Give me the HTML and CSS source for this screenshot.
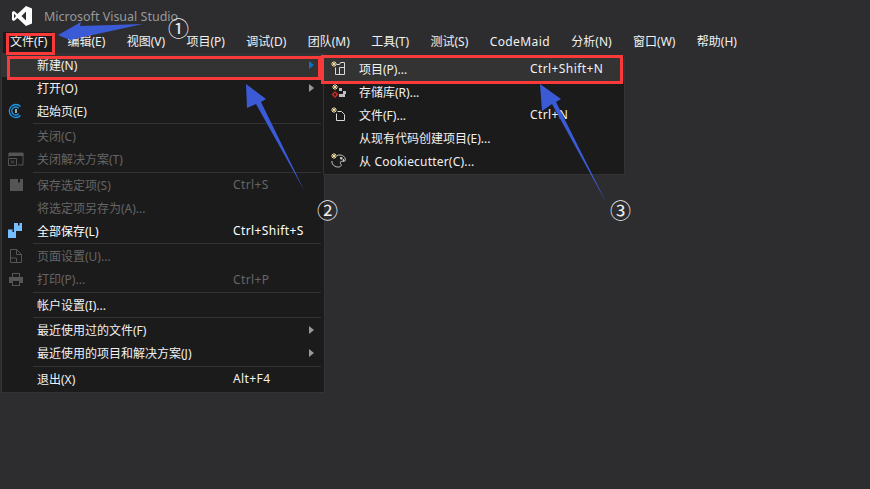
FILE: index.html
```html
<!DOCTYPE html>
<html>
<head>
  <title>Microsoft Visual Studio</title>
  <link rel="stylesheet" href="styles.css">
</head>
<body>
  <div class="title-bar">
    <svg class="vs-logo" width="20" height="20" viewBox="0 0 20 20">
      <path fill="#fff" d="M14 0l6 2.5v15L14 20 5.5 12 2 15l-2-1V6l2-1 3.5 3zM14 5.5L9.5 10l4.500 4.500zM2 7.500v5L4 10z"/>
    </svg>
    <span class="title-text">Microsoft Visual Studio</span>
  </div>

  <div class="menu-bar">
    <span class="menu-top active">文件(F)</span>
    <span class="menu-top">编辑(E)</span>
    <span class="menu-top">视图(V)</span>
    <span class="menu-top">项目(P)</span>
    <span class="menu-top">调试(D)</span>
    <span class="menu-top">团队(M)</span>
    <span class="menu-top">工具(T)</span>
    <span class="menu-top">测试(S)</span>
    <span class="menu-top wide">CodeMaid</span>
    <span class="menu-top">分析(N)</span>
    <span class="menu-top">窗口(W)</span>
    <span class="menu-top">帮助(H)</span>
  </div>

  <!-- file menu -->
  <div class="dropdown file-menu">
    <div class="item hover"><span class="icon"></span><span class="label">新建(N)</span><i class="more blue"></i></div>
    <div class="item"><span class="icon"></span><span class="label">打开(O)</span><i class="more"></i></div>
    <div class="item">
      <span class="icon">
        <svg width="16" height="16" viewBox="0 0 16 16" fill="none" stroke="#1c97ea" stroke-width="1.300">
          <path d="M12.500 3.500A6.500 6.500 0 1 0 12.500 12.500"/>
          <path d="M10.800 5.400A4 4 0 1 0 10.800 10.600"/>
          <path d="M8 6v4" stroke="#f1f1f1"/>
        </svg>
      </span>
      <span class="label">起始页(E)</span>
    </div>
    <div class="sep"></div>
    <div class="item off"><span class="icon"></span><span class="label">关闭(C)</span></div>
    <div class="item off">
      <span class="icon">
        <svg width="16" height="14" viewBox="0 0 16 14" fill="none" stroke="#555" stroke-width="1">
          <path d="M1 5V1.500h14V13h-5"/>
          <path d="M1 1h14v2.500H1z" fill="#555"/>
          <path d="M.5 6.500h8v7h-8zM3 8.500l3 3M6 8.500l-3 3"/>
        </svg>
      </span>
      <span class="label">关闭解决方案(T)</span>
    </div>
    <div class="sep"></div>
    <div class="item off">
      <span class="icon">
        <svg width="13" height="12" viewBox="0 0 13 12">
          <path fill="#555" d="M0 0h13v12H0zM8 0v3.500h2V0z" fill-rule="evenodd"/>
        </svg>
      </span>
      <span class="label">保存选定项(S)</span><span class="keys">Ctrl+S</span>
    </div>
    <div class="item off"><span class="icon"></span><span class="label">将选定项另存为(A)...</span></div>
    <div class="item bright">
      <span class="icon">
        <svg width="16" height="15" viewBox="0 0 16 15">
          <path fill="#75beff" d="M0 6.500h8V15H0z"/>
          <path fill="#75beff" d="M6 0h8v8H6z"/>
          <path fill="#1b1b1c" d="M4.500 6.500h1.500v2.500H4.500zM10 0h1.500v2.500H10z"/>
        </svg>
      </span>
      <span class="label">全部保存(L)</span><span class="keys">Ctrl+Shift+S</span>
    </div>
    <div class="sep"></div>
    <div class="item off">
      <span class="icon">
        <svg width="12" height="14" viewBox="0 0 12 14" fill="none" stroke="#555">
          <path d="M.5.500h6l5 5v8H.5z"/>
          <path d="M6.500.500v5h5"/>
          <path d="M.5 9h6v5"/>
        </svg>
      </span>
      <span class="label">页面设置(U)...</span>
    </div>
    <div class="item off">
      <span class="icon">
        <svg width="14" height="13" viewBox="0 0 14 13">
          <path fill="#555" d="M3 0h8v4h3v6h-3v3H3v-3H0V4h3zM4 1v3h6V1zM4 8v4h6V8z" fill-rule="evenodd"/>
        </svg>
      </span>
      <span class="label">打印(P)...</span><span class="keys">Ctrl+P</span>
    </div>
    <div class="sep"></div>
    <div class="item"><span class="icon"></span><span class="label">帐户设置(I)...</span></div>
    <div class="sep"></div>
    <div class="item"><span class="icon"></span><span class="label">最近使用过的文件(F)</span><i class="more"></i></div>
    <div class="item"><span class="icon"></span><span class="label">最近使用的项目和解决方案(J)</span><i class="more"></i></div>
    <div class="sep"></div>
    <div class="item"><span class="icon"></span><span class="label">退出(X)</span><span class="keys">Alt+F4</span></div>
  </div>

  <!-- new submenu -->
  <div class="dropdown new-menu">
    <div class="item hover">
      <span class="icon">
        <svg width="15" height="15" viewBox="0 0 15 15" fill="none" stroke="#d8d8d8">
          <path d="M5.500 3.500h3l1-2h4v12h-9v-7"/>
          <path d="M8.500 6.500h5M8.500 6.500v7"/>
          <path d="M3 0v6M0 3h6M1 1l4 4M5 1L1 5" stroke="#f0d9a0"/>
        </svg>
      </span>
      <span class="label">项目(P)...</span><span class="keys">Ctrl+Shift+N</span>
    </div>
    <div class="item">
      <span class="icon">
        <svg width="15" height="16" viewBox="0 0 15 16">
          <path d="M4 0v6M1 3h6M2 1l4 4M6 1L2 5" stroke="#f0d9a0" fill="none"/>
          <path d="M4 7l3.500 3.500L4 14 .5 10.500z" fill="#c42b1c"/>
          <path d="M3 9.500h2v2H3z" fill="#1b1b1c"/>
          <path d="M8 4h3v3H8zM12 7h3v3h-3zM8 10h6v3H8z" fill="#c0c0c0"/>
        </svg>
      </span>
      <span class="label">存储库(R)...</span>
    </div>
    <div class="item">
      <span class="icon">
        <svg width="15" height="15" viewBox="0 0 15 15" fill="none" stroke="#d8d8d8">
          <path d="M6.500 4.500h4l3 3v6h-8v-7"/>
          <path d="M3 0v6M0 3h6M1 1l4 4M5 1L1 5" stroke="#f0d9a0"/>
        </svg>
      </span>
      <span class="label">文件(F)...</span><span class="keys">Ctrl+N</span>
    </div>
    <div class="item"><span class="icon"></span><span class="label">从现有代码创建项目(E)...</span></div>
    <div class="item">
      <span class="icon">
        <svg width="15" height="15" viewBox="0 0 15 15" fill="none" stroke="#c8c8c8">
          <path d="M6 2.500c4-1.500 8 .5 8.500 4 .3 2-2.500 2-4 1.800-1.500 0-1.500 2 -.5 3 1 1.500-1 3-3.500 2.700C3 13.500.5 11 1 8"/>
          <path d="M9.500 4.500h1.500v1.500H9.500zM12 6.500h1v1h-1z" fill="#c8c8c8"/>
          <path d="M3 0v6M0 3h6M1 1l4 4M5 1L1 5" stroke="#f0d9a0"/>
        </svg>
      </span>
      <span class="label latin">从 Cookiecutter(C)...</span>
    </div>
  </div>

  <!-- red boxes and arrows drawn on the screenshot -->
  <div class="mark mark-file"></div>
  <div class="mark mark-new"></div>
  <div class="mark mark-project"></div>
  <svg class="arrows" width="870" height="489" viewBox="0 0 870 489">
    <path fill="#3b5bd6" d="M58 35L81 22 80 26 143 24 88 36 70 40z"/>
    <path fill="#3b5bd6" d="M246 84L266 99 261 102 304 190 256 104 247 108z"/>
    <path fill="#3b5bd6" d="M540 84L561 99 556 102 607 204 552 104 542 111z"/>
  </svg>
  <span class="num num-1">①</span>
  <span class="num num-2">②</span>
  <span class="num num-3">③</span>
</body>
</html>
```

FILE: styles.css
```css
body {
  margin: 0;
  height: 489px;
  overflow: hidden;
  background-color: #2d2d30;
  color: #f1f1f1;
  font-family: "Noto Sans", "Noto Sans CJK SC", sans-serif;
  font-size: 12px;
}

.title-bar {
  display: flex;
  align-items: center;
  height: 32px;
  padding-left: 12px;
  box-sizing: border-box;
}

.vs-logo {
  margin-right: 12px;
}

.title-text {
  padding-top: 1px;
  color: #999;
  font-size: 12.500px;
}

.menu-bar {
  display: flex;
  height: 21px;
  padding-left: 3px;
}

.menu-top {
  padding: 0 9px 0 7px;
  margin-right: 5.400px;
  line-height: 20px;
  white-space: nowrap;
}

.menu-top.active {
  padding-right: 4.500px;
  margin-right: 8.500px;
  background-color: #1b1b1c;
}

.menu-top.wide {
  letter-spacing: .4px;
}

.dropdown {
  position: absolute;
  box-sizing: border-box;
  background-color: #1b1b1c;
  border: 1px solid #333337;
}

.file-menu {
  left: 1px;
  top: 53px;
  width: 324px;
  height: 340px;
}

.new-menu {
  left: 323px;
  top: 55px;
  width: 302px;
  height: 120px;
  padding-top: 2px;
}

.item {
  display: flex;
  align-items: center;
  box-sizing: border-box;
  height: 23px;
  padding-bottom: 2px;
  white-space: nowrap;
}

.item.hover {
  background-color: #333334;
}

.item.off {
  color: #656565;
}

.item.bright {
  color: #fff;
}

.icon {
  display: flex;
  align-items: center;
  justify-content: center;
  flex: none;
  width: 28px;
  margin-right: 7px;
}

.label {
  width: 196px;
  flex: none;
}

.label.latin {
  letter-spacing: .2px;
}

.new-menu .label {
  width: 171px;
}

.keys {
  letter-spacing: .4px;
}

.more {
  margin-left: auto;
  margin-right: 10px;
  border-left: 5px solid #999;
  border-top: 4px solid transparent;
  border-bottom: 4px solid transparent;
}

.more.blue {
  border-left-color: #0e70c0;
}

.sep {
  height: 1px;
  margin: 0 3px 1.500px 31px;
  background-color: #333337;
}

.mark {
  position: absolute;
  box-sizing: border-box;
  border: 3px solid #f83a3a;
}

.mark-file {
  left: 6px;
  top: 33px;
  width: 49px;
  height: 22px;
}

.mark-new {
  left: 7px;
  top: 56px;
  width: 314px;
  height: 24px;
}

.mark-project {
  left: 321px;
  top: 55px;
  width: 302px;
  height: 29px;
}

.arrows {
  position: absolute;
  left: 0;
  top: 0;
}

.num {
  position: absolute;
  font-family: "Noto Sans CJK SC", sans-serif;
  font-size: 21px;
  line-height: 24px;
  color: #eee;
}

.num-1 {
  left: 168px;
  top: 15px;
}

.num-2 {
  left: 317px;
  top: 197px;
}

.num-3 {
  left: 610px;
  top: 197px;
}
```
